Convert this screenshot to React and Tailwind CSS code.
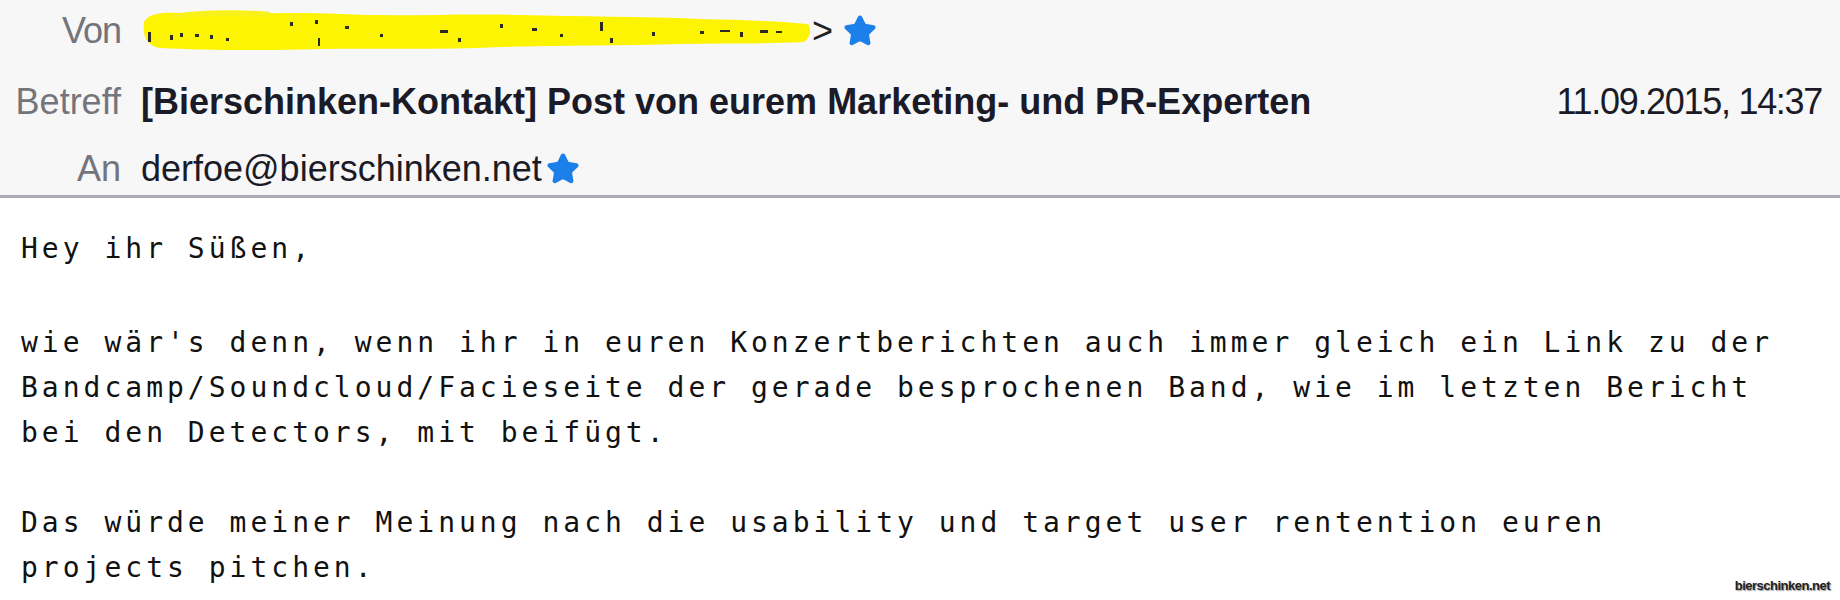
import React from 'react';
import { Star } from 'lucide-react';

const BODY = [
  { text: 'Hey ihr Süßen,', gap: true },
  { text: '' },
  { text: "wie wär's denn, wenn ihr in euren Konzertberichten auch immer gleich ein Link zu der" },
  { text: 'Bandcamp/Soundcloud/Facieseite der gerade besprochenen Band, wie im letzten Bericht' },
  { text: 'bei den Detectors, mit beifügt.' },
  { text: '' },
  { text: 'Das würde meiner Meinung nach die usability und target user rentention euren' },
  { text: 'projects pitchen.' },
];

function BlueStar() {
  return <Star className="w-[34px] h-[34px] shrink-0" fill="#1d7fe9" color="#1d7fe9" strokeWidth={2} />;
}

// Yellow marker scribble over the sender address
function Scribble() {
  const flecks = [
    [8, 24, 3, 10], [30, 27, 3, 5], [40, 25, 3, 4], [55, 26, 4, 3], [70, 27, 3, 4], [86, 30, 3, 3],
    [150, 14, 3, 4], [175, 12, 3, 4], [178, 30, 2, 8], [205, 18, 4, 3], [240, 26, 3, 3],
    [300, 22, 8, 3], [318, 30, 3, 4], [360, 16, 3, 4], [392, 20, 5, 3], [420, 26, 3, 3],
    [460, 14, 3, 9], [470, 30, 3, 5], [512, 24, 3, 4], [560, 23, 4, 3], [580, 22, 10, 2],
    [600, 24, 3, 5], [620, 22, 8, 3], [636, 23, 6, 2],
  ];
  return (
    <svg width="672" height="46" viewBox="0 0 672 46" className="shrink-0">
      <path
        d="M4 14 C8 6 20 4 40 5 C90 8 140 3 200 6 C260 9 320 5 380 7 C440 9 500 8 560 11 C600 12 640 13 668 16 C672 22 670 30 664 34 C620 36 580 35 540 36 C480 38 420 37 360 39 C300 42 240 40 180 41 C120 43 60 42 20 40 C8 38 2 30 4 14 Z"
        fill="#fcf400"
      />
      <path d="M30 6 C60 2 100 1 130 4 L128 9 C100 8 60 8 32 10 Z" fill="#f8f21a" />
      {flecks.map(([x, y, w, h], i) => (
        <rect key={i} x={x} y={y} width={w} height={h} fill="#2b2b22" />
      ))}
    </svg>
  );
}

export default function App() {
  const sans = { fontFamily: '"Liberation Sans", Arial, sans-serif' };
  return (
    <div className="relative w-[1840px] h-[600px] overflow-hidden bg-white">
      {/* Header */}
      <div className="h-[198px] bg-[#f7f7f7] border-b-[3px] border-[#a9acb0] text-[36px]" style={sans}>
        <div className="flex items-center h-[54px] pt-[8px]">
          <div className="w-[121px] text-right text-[#74757c] tracking-[-1px]">Von</div>
          <div className="flex items-center ml-[19px]">
            <Scribble />
            <span className="text-[#222] mr-[10px]">&gt;</span>
            <BlueStar />
          </div>
        </div>
        <div className="flex items-center h-[96px] pr-[18px]">
          <div className="w-[121px] text-right text-[#74757c]">Betreff</div>
          <div className="ml-[20px] font-bold text-[#1b1b27]">
            [Bierschinken-Kontakt] Post von eurem Marketing- und PR-Experten
          </div>
          <div className="ml-auto text-[#1b1b27] tracking-[-1.3px]">11.09.2015, 14:37</div>
        </div>
        <div className="flex items-center h-[38px]">
          <div className="w-[121px] text-right text-[#74757c]">An</div>
          <div className="ml-[20px] mr-[4px] text-[#1b1b27]">derfoe@bierschinken.net</div>
          <BlueStar />
        </div>
      </div>

      {/* Body */}
      <div
        className="pt-[28px] pl-[21px] text-[28px] leading-[45px] tracking-[4px] text-[#111] whitespace-pre"
        style={{ fontFamily: '"DejaVu Sans Mono", "Liberation Mono", monospace' }}
      >
        {BODY.map((l, i) => (
          <div key={i} className={l.gap ? 'mb-[4px]' : ''}>
            {l.text || '\u00a0'}
          </div>
        ))}
      </div>

      {/* Watermark */}
      <div
        className="absolute right-[10px] bottom-[5px] text-[13px] font-bold tracking-[-0.5px] text-[#222] [text-shadow:1px_1px_1px_#9a9a9a]"
        style={sans}
      >
        bierschinken.net
      </div>
    </div>
  );
}
